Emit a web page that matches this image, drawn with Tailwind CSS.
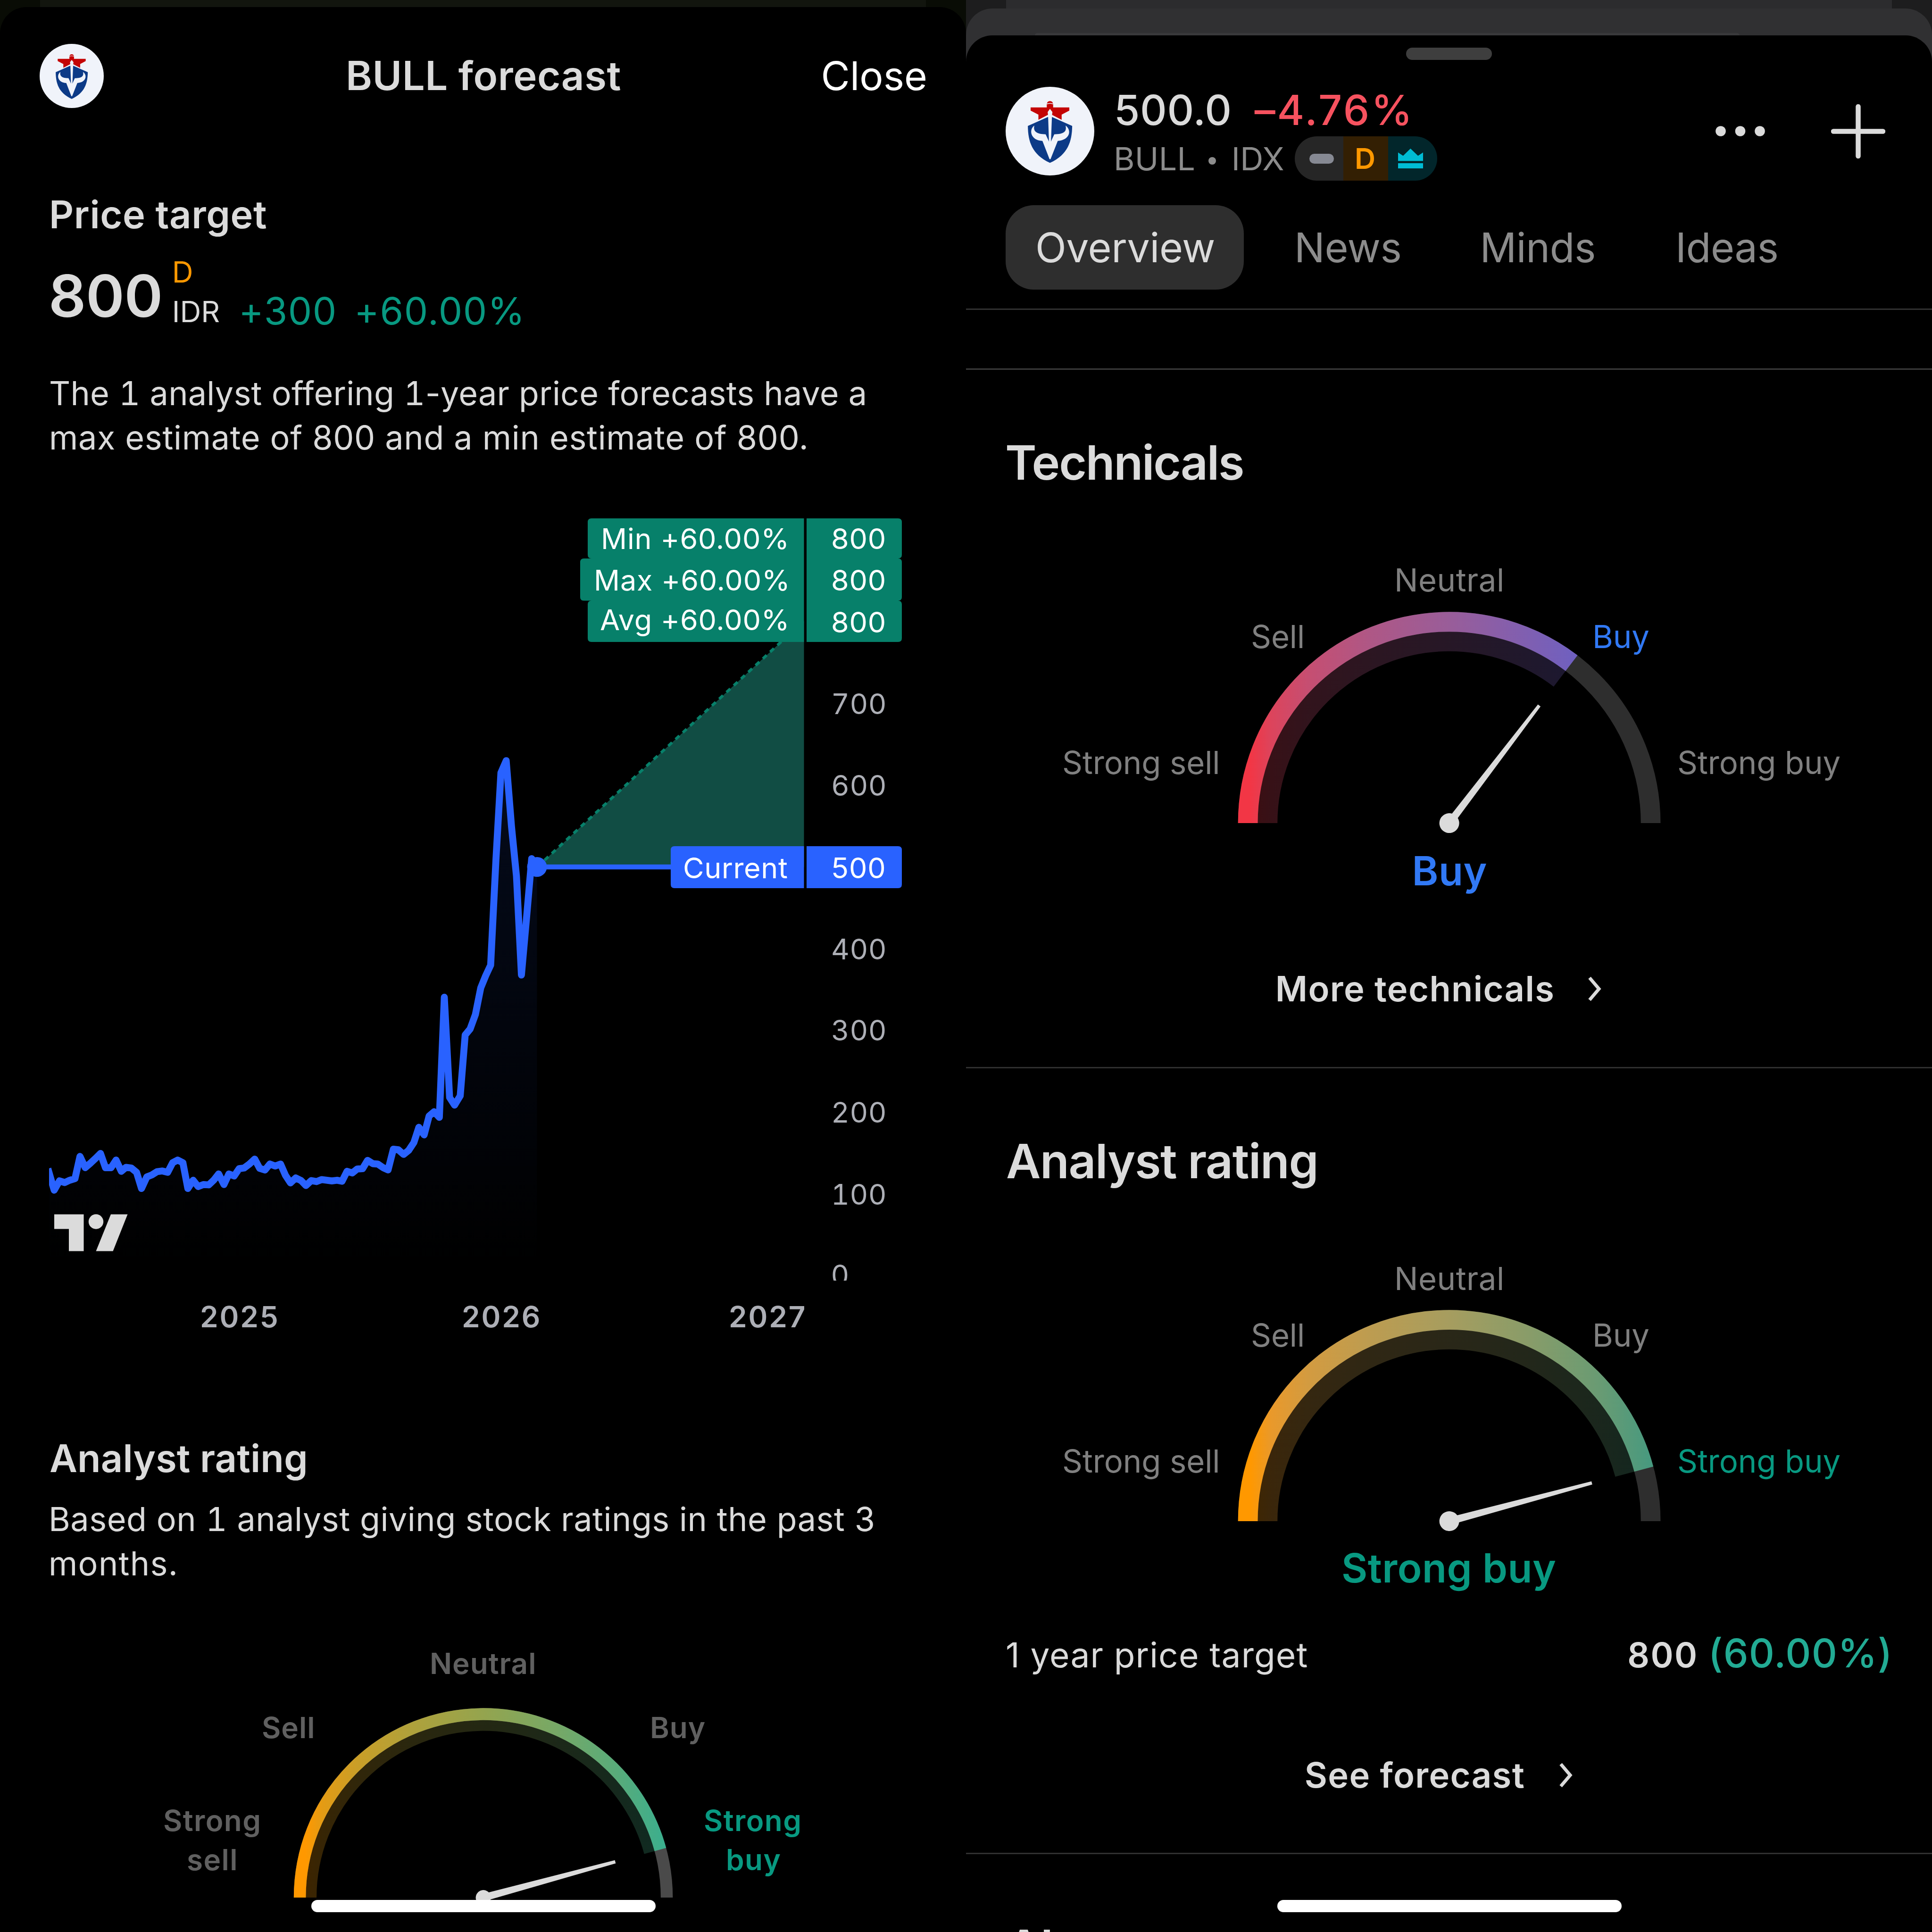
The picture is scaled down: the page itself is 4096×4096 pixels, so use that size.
<!DOCTYPE html>
<html lang="en">
<head>
  <meta charset="UTF-8">
  <meta name="viewport" content="width=device-width, initial-scale=1.0">
  <title>BULL | Forecast</title>
  <script src="https://cdn.jsdelivr.net/npm/@tailwindcss/browser@4"></script>
</head>
<body class="bg-black font-['Inter',sans-serif] text-[#dbdbdb] w-[4096px] h-[4096px] overflow-hidden flex">

  <!-- Shared symbols -->
  <svg class="hidden">
    <symbol id="bull-logo" viewBox="75 63 614 614">
      <circle cx="382" cy="370" r="307" fill="#f0f3fa"/>
      <path fill="#c40404" d="M248 206H360V182Q364 162 382 162T404 182V206H516V228L463 256V292L382 250L302 292V256L248 228Z"/>
      <path stroke="#f0f3fa" stroke-width="5" d="M360 182Q382 174 404 182" fill="none"/>
      <path fill="#0c3a87" d="M229 334L366 273H398L536 334C534 440 508 532 382 590C256 532 230 440 229 334Z"/>
      <path fill="#f0f3fa" d="M382 216L399 238L396 262L389 442H375L369 262L366 238Z"/>
      <path fill="#f0f3fa" d="M274 332C232 362 250 436 330 438L379 564H386L436 438C522 432 534 362 490 332C500 372 480 392 412 392L389 442H375L352 392C290 392 264 372 274 332Z"/>
    </symbol>
    <symbol id="chevron" viewBox="0 0 29 53">
      <path d="M4 3L24 26.5L4 50" fill="none" stroke="#dbdbdb" stroke-width="7"/>
    </symbol>
  </svg>

  <!-- Forecast screen -->
  <div class="relative w-[2048px] h-[4096px] overflow-hidden bg-[#090c05]">
    <div class="h-[15px] mx-[85px] bg-[#12150e]"></div>
    <div class="bg-black rounded-t-[56px] h-[4081px] flex flex-col">

      <div class="h-[292px] shrink-0 px-[84px] grid grid-cols-[1fr_auto_1fr] items-center">
        <svg class="w-[136px] h-[136px]"><use href="#bull-logo"/></svg>
        <h1 class="pl-[2px] text-[85px] font-semibold tracking-[.55px]">BULL forecast</h1>
        <span class="-mr-[2px] text-[84px] text-white text-right">Close</span>
      </div>

      <h2 class="mt-[98px] pl-[104px] text-[81px] leading-[100px] font-semibold tracking-[.6px]">Price target</h2>
      <div class="h-[244px] pl-[103px] flex items-center">
        <span class="text-[124px] font-semibold tracking-[-.4px]">800</span>
        <div class="ml-[20px] pb-[16px] flex flex-col text-[62px] leading-[84px]">
          <span class="text-[#ff9800]">D</span>
          <span>IDR</span>
        </div>
        <span class="ml-[40px] pt-[63px] text-[80px] tracking-[1.6px] text-[#089981]">+300</span>
        <span class="ml-[36px] pt-[63px] text-[80px] tracking-[1.7px] text-[#089981]">+60.00%</span>
      </div>
      <p class="mt-[38px] pl-[104px] text-[70px] leading-[94px] whitespace-nowrap"><span class="tracking-[.24px]">The <span class="tabular-nums">1</span> analyst offering <span class="tabular-nums">1</span>-year price forecasts have a</span><br><span class="tracking-[.7px]">max estimate of 800 and a min estimate of 800.</span></p>

      <!-- Price chart -->
      <svg class="w-[2048px] h-[1925px] shrink-0" viewBox="0 975 2048 1925">
        <defs>
          <linearGradient id="area" gradientUnits="userSpaceOnUse" x1="0" y1="40" x2="0" y2="1580">
            <stop offset="0" stop-color="#2962ff" stop-opacity=".11"/>
            <stop offset="1" stop-color="#2962ff" stop-opacity="0"/>
          </linearGradient>
          <clipPath id="plot"><rect x="104" y="975" width="1944" height="1740"/></clipPath>
        </defs>
        <g clip-path="url(#plot)">
          <path d="M1139 1838L1704.5 1316V1838Z" fill="#114d44"/>
          <path d="M1139 1838L1704.5 1316" stroke="#07806a" stroke-width="6" stroke-dasharray="11 10"/>
          <path d="M1139 1838H1430" stroke="#2962ff" stroke-width="10.5"/>
          <g transform="translate(91.67 1576.8) scale(.70159)">
            <path fill="url(#area)" d="M18 1300L33 1349L49 1321L65 1326L96 1314L111 1247L127 1281L158 1253L173 1238L188 1281L205 1281L220 1258L236 1292L250 1280L282 1295L297 1344L313 1309L344 1293L376 1295L391 1266L406 1258L422 1266L437 1344L453 1319L468 1338L500 1333L530 1300L546 1332L561 1300L577 1306L592 1284L607 1282L639 1255L654 1283L670 1288L685 1270L717 1270L747 1327L763 1312L794 1335L810 1320L841 1317L903 1322L918 1292L965 1284L980 1259L1011 1270L1042 1288L1058 1225L1089 1241L1120 1205L1135 1159L1151 1182L1166 1125L1197 1129L1212 766L1228 1069L1243 1092L1260 1064L1275 880L1290 862L1306 818L1322 738L1352 669L1368 350L1383 88L1399 51L1415 250L1430 400L1445 699L1476 347L1492 371V1580H18Z"/>
            <path fill="none" stroke="#2962ff" stroke-width="21" stroke-linejoin="round" d="M14 1284L33 1349L49 1321L65 1326L80 1319L96 1314L111 1247L127 1281L142 1268L158 1253L173 1238L188 1281L205 1281L220 1258L236 1292L250 1280L266 1282L282 1295L297 1344L313 1309L328 1303L344 1293L360 1291L376 1295L391 1266L406 1258L422 1266L437 1344L453 1319L468 1338L484 1332L500 1333L515 1319L530 1300L546 1332L561 1300L577 1306L592 1284L607 1282L623 1270L639 1255L654 1283L670 1288L685 1270L701 1276L717 1270L732 1304L747 1327L763 1312L779 1320L794 1335L810 1320L826 1323L841 1317L872 1321L888 1319L903 1322L918 1292L934 1297L949 1285L965 1284L980 1259L996 1269L1011 1270L1027 1281L1042 1288L1058 1225L1073 1227L1089 1241L1104 1229L1120 1205L1135 1159L1151 1182L1166 1125L1181 1112L1197 1129L1212 766L1228 1069L1243 1092L1260 1064L1275 880L1290 862L1306 818L1322 738L1337 701L1352 669L1368 350L1383 88L1399 51L1415 250L1430 400L1445 699L1461 520L1476 347L1492 371"/>
          </g>
          <circle cx="1138.5" cy="1838" r="21" fill="#2962ff"/>
          <text x="1762" y="2725" class="text-[60px]" fill="#adafb6">0</text>
        </g>

        <!-- Target labels -->
        <g fill="#07806a">
          <path d="M1254 1099H1704.5V1361H1254Q1246 1361 1246 1353V1281.5Q1246 1273.5 1254 1273.5H1238Q1230 1273.5 1230 1265.5V1192Q1230 1184 1238 1184H1254Q1246 1184 1246 1176V1107Q1246 1099 1254 1099Z"/>
          <path d="M1710 1099H1904Q1912 1099 1912 1107V1176Q1912 1184 1904 1184Q1912 1184 1912 1192V1265.5Q1912 1273.5 1904 1273.5Q1912 1273.5 1912 1281.5V1353Q1912 1361 1904 1361H1710Z"/>
        </g>
        <g fill="#2962ff">
          <path d="M1430 1794H1704.5V1883H1430Q1422 1883 1422 1875V1802Q1422 1794 1430 1794Z"/>
          <path d="M1710 1794H1904Q1912 1794 1912 1802V1875Q1912 1883 1904 1883H1710Z"/>
        </g>
        <g class="text-[61px] tracking-[.8px]" fill="#ffffff">
          <text x="1274" y="1163.5">Min +60.00%</text>
          <text x="1259" y="1252">Max +60.00%</text>
          <text x="1272" y="1335.5">Avg +60.00%</text>
          <text x="1448" y="1862" class="tracking-normal" textLength="222">Current</text>
          <text x="1762" y="1163.5">800</text>
          <text x="1762" y="1252">800</text>
          <text x="1762" y="1340.5">800</text>
          <text x="1762" y="1862">500</text>
        </g>
        <g class="text-[60px] tracking-[.5px] tabular-nums" fill="#adafb6">
          <text x="1762" y="1514">700</text>
          <text x="1762" y="1686.5">600</text>
          <text x="1762" y="2033.5">400</text>
          <text x="1762" y="2206">300</text>
          <text x="1762" y="2379.5">200</text>
          <text x="1762" y="2553.5">100</text>
        </g>
        <g class="text-[62px] font-semibold tracking-[2.9px]" fill="#adafb6">
          <text x="424" y="2814">2025</text>
          <text x="979" y="2814">2026</text>
          <text x="1545" y="2814">2027</text>
        </g>

        <!-- Chart watermark -->
        <g fill="#dbdbdb">
          <path d="M115 2574.5H177.5V2652.5H146V2605.5H115Z"/>
          <circle cx="203.5" cy="2590" r="15.7"/>
          <path d="M235 2574.5H270.5L239.5 2652.5H203.5Z"/>
        </g>
      </svg>

      <h2 class="mt-[142px] pl-[105px] text-[81px] leading-[100px] font-semibold tracking-[.13px]">Analyst rating</h2>
      <p class="mt-[32px] pl-[103px] text-[70px] leading-[94px] whitespace-nowrap"><span class="tracking-[.54px]">Based on <span class="tabular-nums">1</span> analyst giving stock ratings in the past 3</span><br><span class="tracking-[1.3px]">months.</span></p>

      <svg class="w-[2048px] h-[733px] shrink-0" viewBox="0 3361.5 2048 733">
        <defs>
          <linearGradient id="rating-small" gradientUnits="userSpaceOnUse" x1="623" y1="0" x2="1426" y2="0">
            <stop offset=".03" stop-color="#ff9800"/>
            <stop offset=".075" stop-color="#e49b14"/>
            <stop offset=".165" stop-color="#ca9e27"/>
            <stop offset=".309" stop-color="#afa13b"/>
            <stop offset=".5" stop-color="#94a44e"/>
            <stop offset=".691" stop-color="#77a866"/>
            <stop offset=".854" stop-color="#58ab7a"/>
            <stop offset="1" stop-color="#36af91"/>
          </linearGradient>
        </defs>
        <g fill="none">
          <path d="M635.6 4022.6A389 389 0 0 1 1413.6 4022.6" stroke="#4a4a4a" stroke-width="25.5"/>
          <path d="M659.6 4022.6A365 365 0 0 1 1389.6 4022.6" stroke="url(#rating-small)" stroke-width="23" opacity=".24" pathLength="180" stroke-dasharray="164.8 200"/>
          <path d="M635.6 4022.6A389 389 0 0 1 1413.6 4022.6" stroke="url(#rating-small)" stroke-width="25.5" pathLength="180" stroke-dasharray="164.8 200"/>
        </g>
        <g fill="#dbdbdb" transform="translate(1024.6 4022.6) rotate(-15.2)">
          <path d="M0 -8L290 -3.5V3.5L0 8Z"/>
          <circle r="16"/>
        </g>
        <g class="text-[62px] font-semibold tracking-[1px]" fill="#606060">
          <text x="911" y="3548">Neutral</text>
          <text x="555" y="3684">Sell</text>
          <text x="1378" y="3684">Buy</text>
          <g class="tracking-[1.4px]">
            <text x="346" y="3881.5">Strong</text>
            <text x="396" y="3964">sell</text>
            <text x="1492" y="3881.5" fill="#089981">Strong</text>
            <text x="1539" y="3964" fill="#089981">buy</text>
          </g>
        </g>
      </svg>
    </div>
    <div class="absolute left-[660px] top-[4028px] w-[730px] h-[26px] rounded-full bg-white"></div>
  </div>

  <!-- Symbol screen -->
  <div class="relative w-[2048px] h-[4096px] overflow-hidden bg-[#1d1d1e]">
    <div class="h-[18px] mx-[85px] bg-[#2c2c2e]"></div>
    <div class="bg-[#303032] rounded-t-[56px]">
      <div class="h-[57px] flex flex-col justify-end">
        <div class="h-[5px] ml-[146px] mr-[408px] rounded-t-full bg-[#39393b]"></div>
      </div>
      <div class="bg-black rounded-t-[56px] h-[4021px] flex flex-col">
        <div class="mt-[26px] mx-auto w-[182px] h-[26px] shrink-0 rounded-full bg-[#3e3e3e]"></div>

        <div class="mt-[57px] h-[188px] shrink-0 pl-[84px] pr-[99px] flex">
          <svg class="w-[188px] h-[188px]"><use href="#bull-logo"/></svg>
          <div class="ml-[41px]">
            <div class="h-[98px] pl-[1px] flex items-center text-[88px] font-medium leading-none">
              <span class="tracking-[.6px]">500.0</span>
              <span class="ml-[48px] w-[340px] whitespace-nowrap tracking-[3.8px] text-[#f7525f]">–4.76%</span>
            </div>
            <div class="h-[108px] flex items-center">
              <div class="w-[362px] flex items-center text-[68px] tracking-[.3px] text-[#8c8c8c]">
                <span>BULL</span>
                <div class="ml-[28px] w-[16px] h-[16px] rounded-full bg-[#8c8c8c] translate-y-[5px]"></div>
                <span class="ml-auto">IDX</span>
              </div>
              <div class="ml-[22px] w-[302px] h-[94px] rounded-full overflow-hidden flex">
                <div class="w-[103px] bg-[#262626] flex items-center pl-[31px]">
                  <div class="w-[52px] h-[21px] rounded-full bg-[#868993]"></div>
                </div>
                <div class="w-[95px] pr-[3px] bg-[#331f03] flex items-center justify-center text-[61px] font-semibold leading-none text-[#ff9800]">D</div>
                <div class="flex-1 bg-[#02262b] flex items-center pl-[21px]">
                  <svg class="w-[53px] h-[42px]" viewBox="0 0 173 137" fill="#00bcd4"><path d="M0 27L35 50L86 0L138 50L173 27V86H0Z"/><path d="M0 101H173V137H0Z"/></svg>
                </div>
              </div>
            </div>
          </div>
          <div class="ml-auto flex items-center gap-[140px]">
            <svg class="w-[105px] h-[22px]" viewBox="0 0 105 22" fill="#dbdbdb"><circle cx="11" cy="11" r="10.8"/><circle cx="52.5" cy="11" r="10.8"/><circle cx="94" cy="11" r="10.8"/></svg>
            <svg class="w-[115px] h-[115px]" viewBox="0 0 115 115"><path d="M57.5 5V110M5 57.5H110" stroke="#dbdbdb" stroke-width="10.5" stroke-linecap="round"/></svg>
          </div>
        </div>

        <div class="mt-[63px] ml-[84px] h-[179px] shrink-0 flex items-center text-[86px] tracking-[-.4px] text-[#8c8c8c]">
          <div class="w-[505px] h-[179px] pl-[2px] pt-[2px] rounded-[60px] bg-[#2e2e2e] text-[#dbdbdb] flex items-center justify-center">Overview</div>
          <span class="ml-[107px] pt-[2px]">News</span>
          <span class="ml-[166px] pt-[2px]">Minds</span>
          <span class="ml-[169px] pt-[2px]">Ideas</span>
        </div>
        <div class="mt-[40px] h-[3px] shrink-0 bg-[#303030]"></div>
        <div class="mt-[124px] h-[3px] shrink-0 bg-[#3a3a3a]"></div>

        <!-- Technicals -->
        <h2 class="mt-[136px] pl-[83px] text-[101px] leading-[120px] font-semibold tracking-[-2.18px]">Technicals</h2>
        <svg class="w-[2048px] h-[900px] shrink-0" viewBox="0 -1.5 2048 900">
          <defs>
            <linearGradient id="technicals" gradientUnits="userSpaceOnUse" x1="576" y1="0" x2="1473" y2="0">
              <stop offset=".03" stop-color="#f23645"/>
              <stop offset=".08" stop-color="#dc445c"/>
              <stop offset=".165" stop-color="#c64e71"/>
              <stop offset=".309" stop-color="#af5785"/>
              <stop offset=".5" stop-color="#995d99"/>
              <stop offset=".8" stop-color="#6f60c0"/>
            </linearGradient>
          </defs>
          <g fill="none" stroke-width="41.8">
            <path d="M597.6 703.6A427 427 0 0 1 1451.6 703.6" stroke="#2e2e2e"/>
            <path d="M639.4 703.6A385.2 385.2 0 0 1 1409.8 703.6" stroke="url(#technicals)" opacity=".25" pathLength="180" stroke-dasharray="127.4 200"/>
            <path d="M597.6 703.6A427 427 0 0 1 1451.6 703.6" stroke="url(#technicals)" pathLength="180" stroke-dasharray="127.4 200"/>
          </g>
          <g fill="#dbdbdb" transform="translate(1024.6 703.6) rotate(-52.6)">
            <path d="M0 -8L314 -3.5V3.5L0 8Z"/>
            <circle r="21"/>
          </g>
          <g class="text-[67px] tracking-[-.1px]" fill="#808080">
            <text x="908" y="212.5" class="tracking-[.5px]">Neutral</text>
            <text x="604" y="332">Sell</text>
            <text x="1328" y="332" fill="#3179f5">Buy</text>
            <text x="204" y="599.5">Strong sell</text>
            <text x="1508" y="599.5">Strong buy</text>
          </g>
          <text x="945.5" y="835" class="text-[85px] font-semibold" fill="#3179f5" textLength="159">Buy</text>
        </svg>
        <div class="mt-[106px] h-[100px] shrink-0 pr-[45px] flex items-center justify-center text-[74px] font-semibold">
          <span class="tracking-[1.35px]">More technicals</span>
          <svg class="ml-[70px] w-[29px] h-[53px]"><use href="#chevron"/></svg>
        </div>
        <div class="mt-[116px] h-[3px] shrink-0 bg-[#303030]"></div>

        <!-- Analyst rating -->
        <h2 class="mt-[136px] pl-[85px] text-[101px] leading-[120px] font-semibold tracking-[-1.4px]">Analyst rating</h2>
        <svg class="w-[2048px] h-[900px] shrink-0" viewBox="0 -1 2048 900">
          <defs>
            <linearGradient id="rating" gradientUnits="userSpaceOnUse" x1="576" y1="0" x2="1473" y2="0">
              <stop offset=".03" stop-color="#ff9800"/>
              <stop offset=".08" stop-color="#e9992b"/>
              <stop offset=".165" stop-color="#d39b40"/>
              <stop offset=".309" stop-color="#bd9c50"/>
              <stop offset=".5" stop-color="#a69d5f"/>
              <stop offset=".691" stop-color="#889c69"/>
              <stop offset=".854" stop-color="#699b73"/>
              <stop offset="1" stop-color="#419981"/>
            </linearGradient>
          </defs>
          <g fill="none" stroke-width="41.8">
            <path d="M597.6 703A427 427 0 0 1 1451.6 703" stroke="#2e2e2e"/>
            <path d="M639.4 703A385.2 385.2 0 0 1 1409.8 703" stroke="url(#rating)" opacity=".25" pathLength="180" stroke-dasharray="165 200"/>
            <path d="M597.6 703A427 427 0 0 1 1451.6 703" stroke="url(#rating)" pathLength="180" stroke-dasharray="165 200"/>
          </g>
          <g fill="#dbdbdb" transform="translate(1024.6 703) rotate(-15)">
            <path d="M0 -8L313 -3.5V3.5L0 8Z"/>
            <circle r="21"/>
          </g>
          <g class="text-[67px] tracking-[-.1px]" fill="#808080">
            <text x="908" y="212.5" class="tracking-[.5px]">Neutral</text>
            <text x="604" y="332.5">Sell</text>
            <text x="1328" y="332.5">Buy</text>
            <text x="204" y="600">Strong sell</text>
            <text x="1508" y="600" fill="#089981">Strong buy</text>
          </g>
          <text x="796" y="833" class="text-[85px] font-semibold tracking-[.5px]" fill="#089981">Strong buy</text>
        </svg>
        <div class="mt-[24px] h-[120px] shrink-0 pl-[84px] pr-[83px] flex items-baseline leading-[120px] text-[73px]">
          <span class="tracking-[1.1px]">1 year price target</span>
          <span class="ml-auto text-[73px] font-semibold tracking-[2.4px]">800</span>
          <span class="ml-[21px] text-[84px] font-medium tracking-[1.2px] text-[#22ab94]">(60.00%)</span>
        </div>
        <div class="mt-[148px] h-[100px] shrink-0 pr-[44px] flex items-center justify-center text-[74px] font-semibold">
          <span class="tracking-[1.36px]">See forecast</span>
          <svg class="ml-[72px] w-[29px] h-[53px]"><use href="#chevron"/></svg>
        </div>
        <div class="mt-[115px] h-[3px] shrink-0 bg-[#303030]"></div>
        <h2 class="mt-[136px] pl-[86px] text-[101px] leading-[120px] font-semibold tracking-[-1.35px]">About</h2>
      </div>
    </div>
    <div class="absolute left-[660px] top-[4028px] w-[730px] h-[26px] rounded-full bg-white"></div>
  </div>

</body>
</html>
